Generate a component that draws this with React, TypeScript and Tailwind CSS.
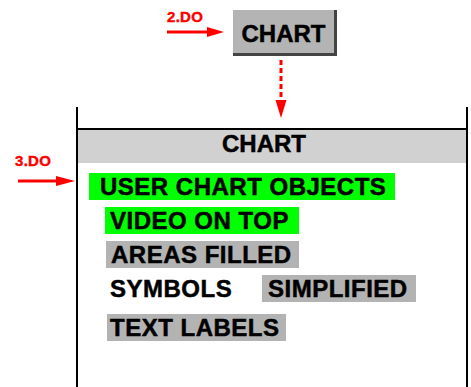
import React from "react";

const T = ({ children }: { children: React.ReactNode }) => (
  <span className="text-[24px] leading-[24px] font-bold tracking-[0.5px] whitespace-nowrap text-black [-webkit-text-stroke:0.5px_black]">
    {children}
  </span>
);

const Box = ({
  children,
  color,
  w,
  ml,
  mt,
}: {
  children: React.ReactNode;
  color: string;
  w: string;
  ml: string;
  mt: string;
}) => (
  <div className={`flex h-[27px] ${w} ${ml} ${mt} ${color} pt-[2px] pl-[5px]`}>
    <T>{children}</T>
  </div>
);

export default function App() {
  return (
    <div
      className="relative flex h-[387px] w-[471px] flex-col overflow-hidden bg-white"
      style={{ fontFamily: '"Liberation Sans", Arial, sans-serif' }}
    >
      {/* top row */}
      <div className="flex pt-[9px] pl-[167px]">
        <div className="flex w-[58px] flex-col">
          <span className="text-[15px] leading-[15px] font-bold tracking-[0.3px] text-[#ff0000] [-webkit-text-stroke:0.4px_#ff0000]">
            2.DO
          </span>
          <svg className="mt-[3px]" width="58" height="10" viewBox="0 0 58 10">
            <line x1="0" y1="5" x2="42" y2="5" stroke="#ff0000" strokeWidth="3" />
            <polygon points="40,0 57,5 40,10" fill="#ff0000" />
          </svg>
        </div>
        <div className="ml-[8px] mt-[1px] flex h-[46px] w-[104px] justify-center border-r-[3px] border-b-[3px] border-[#444444] bg-[#b4b4b4] pt-[12px]">
          <span className="text-[24px] leading-[24px] font-bold text-black [-webkit-text-stroke:0.5px_black]">
            CHART
          </span>
        </div>
      </div>

      {/* dashed arrow */}
      <svg className="mt-[4px] ml-[275px] shrink-0" width="12" height="58" viewBox="0 0 12 58">
        <line x1="6" y1="0" x2="6" y2="42" stroke="#ff0000" strokeWidth="3" strokeDasharray="5 3" />
        <polygon points="0.5,40 11.5,40 6,58" fill="#ff0000" />
      </svg>

      {/* panel row */}
      <div className="-mt-[11px] flex">
        <div className="flex w-[76px] flex-col pl-[15px] pt-[46px]">
          <span className="text-[15px] leading-[15px] font-bold tracking-[0.3px] text-[#ff0000] [-webkit-text-stroke:0.4px_#ff0000]">
            3.DO
          </span>
          <svg className="mt-[8px] ml-[3px]" width="57" height="10" viewBox="0 0 57 10">
            <line x1="0" y1="5" x2="40" y2="5" stroke="#ff0000" strokeWidth="3" />
            <polygon points="38,0 57,5 38,10" fill="#ff0000" />
          </svg>
        </div>
        <div className="flex h-[290px] w-[392px] flex-col border-x-2 border-black">
          <div className="h-[21px]" />
          <div className="border-t-2 border-black" />
          <div className="h-[33px] bg-[#d1d1d1] pt-[2px] pl-[144px]">
            <span className="text-[24px] leading-[24px] font-bold text-black [-webkit-text-stroke:0.5px_black]">
              CHART
            </span>
          </div>
          <div className="flex flex-col">
            <div className="mt-[10px] ml-[11px] flex h-[27px] w-[306px] bg-[#00ff00] pt-[2px] pl-[11px]">
              <T>USER CHART OBJECTS</T>
            </div>
            <Box color="bg-[#00ff00]" w="w-[194px]" ml="ml-[27px]" mt="mt-[7px]">
              VIDEO ON TOP
            </Box>
            <Box color="bg-[#b3b3b3]" w="w-[193px]" ml="ml-[28px]" mt="mt-[7px]">
              AREAS FILLED
            </Box>
            <div className="mt-[7px] flex">
              <div className="h-[27px] w-[184px] pt-[2px] pl-[32px]">
                <T>SYMBOLS</T>
              </div>
              <div className="flex h-[27px] w-[154px] bg-[#b3b3b3] pt-[2px] pl-[6px]">
                <T>SIMPLIFIED</T>
              </div>
            </div>
            <div className="mt-[12px] ml-[29px] flex h-[27px] w-[179px] bg-[#b3b3b3] pt-[2px] pl-[3px]">
              <T>TEXT LABELS</T>
            </div>
          </div>
        </div>
      </div>
    </div>
  );
}
